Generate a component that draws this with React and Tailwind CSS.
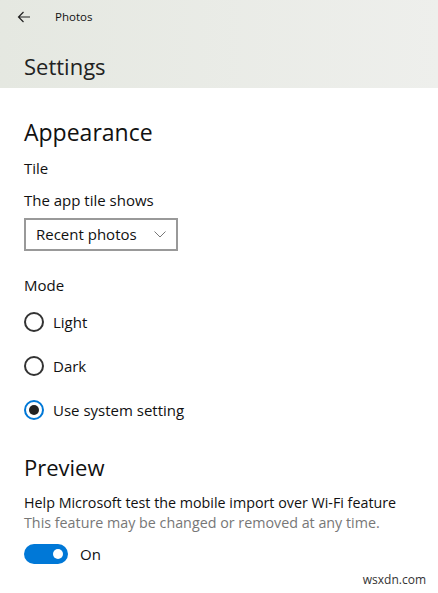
import React, { useState } from 'react';

const font = { fontFamily: '"Open Sans", "Noto Sans", "Liberation Sans", sans-serif' };

const Radio = ({ label, checked, onClick }) => (
  <button onClick={onClick} className="flex items-center gap-[9px] h-[20px] text-left">
    <span
      className={
        'w-[20px] h-[20px] rounded-full border-2 flex items-center justify-center ' +
        (checked ? 'border-[#0078d7]' : 'border-[#333]')
      }
    >
      {checked && <span className="w-[10px] h-[10px] rounded-full bg-[#222]" />}
    </span>
    <span className="text-[15px] text-[#111]">{label}</span>
  </button>
);

export default function App() {
  const [mode, setMode] = useState('system');
  const [preview, setPreview] = useState(true);

  return (
    <div className="w-[438px] h-[593px] bg-white relative overflow-hidden" style={font}>
      {/* title bar + header */}
      <div className="h-[88px] bg-gradient-to-r from-[#e5e8e1] to-[#eeefec] px-[24px]">
        <div className="flex items-center h-[33px] gap-[24px] -ml-[7px]">
          <svg width="14" height="12" viewBox="0 0 14 12" fill="none" stroke="#222" strokeWidth="1.2">
            <path d="M13 6H1.5M6.5 1L1.5 6l5 5" />
          </svg>
          <span className="text-[11.5px] text-[#111]">Photos</span>
        </div>
        <div className="text-[22px] text-[#222] mt-[19px] leading-[28px]">Settings</div>
      </div>

      <div className="px-[24px]">
        <div className="text-[23px] text-[#111] leading-[30px] mt-[29px]">Appearance</div>
        <div className="text-[15px] leading-[22px] text-[#111] mt-[10px]">Tile</div>
        <div className="text-[15px] leading-[22px] text-[#111] mt-[10px]">The app tile shows</div>
        <button className="mt-[7px] w-[154px] h-[33px] border-2 border-[#999] flex items-center justify-between pl-[10px] pr-[10px]">
          <span className="text-[15px] text-[#111]">Recent photos</span>
          <svg width="12" height="7" viewBox="0 0 12 7" fill="none" stroke="#777" strokeWidth="1">
            <path d="M0.5 0.5l5.5 5.5 5.5-5.5" />
          </svg>
        </button>

        <div className="text-[15px] leading-[22px] text-[#111] mt-[23px]">Mode</div>
        <div className="flex flex-col gap-[24px] mt-[16px]">
          <Radio label="Light" checked={mode === 'light'} onClick={() => setMode('light')} />
          <Radio label="Dark" checked={mode === 'dark'} onClick={() => setMode('dark')} />
          <Radio label="Use system setting" checked={mode === 'system'} onClick={() => setMode('system')} />
        </div>

        <div className="text-[22px] text-[#111] leading-[30px] mt-[32px]">Preview</div>
        <div className="text-[14.3px] text-[#111] mt-[11px] leading-[20px] whitespace-nowrap">
          Help Microsoft test the mobile import over Wi-Fi feature
        </div>
        <div className="text-[14.3px] text-[#777] leading-[20px] whitespace-nowrap">
          This feature may be changed or removed at any time.
        </div>
        <button onClick={() => setPreview(!preview)} className="flex items-center gap-[12px] mt-[10px]">
          <span
            className={
              'w-[44px] h-[20px] rounded-full flex items-center px-[5px] ' +
              (preview ? 'bg-[#0078d7] justify-end' : 'bg-white border-2 border-[#333] justify-start')
            }
          >
            <span className={'w-[10px] h-[10px] rounded-full ' + (preview ? 'bg-white' : 'bg-[#333]')} />
          </span>
          <span className="text-[15px] text-[#111]">{preview ? 'On' : 'Off'}</span>
        </button>
      </div>

      <div className="absolute right-[12px] bottom-[4px] text-[12px] text-[#333]">wsxdn.com</div>
    </div>
  );
}
